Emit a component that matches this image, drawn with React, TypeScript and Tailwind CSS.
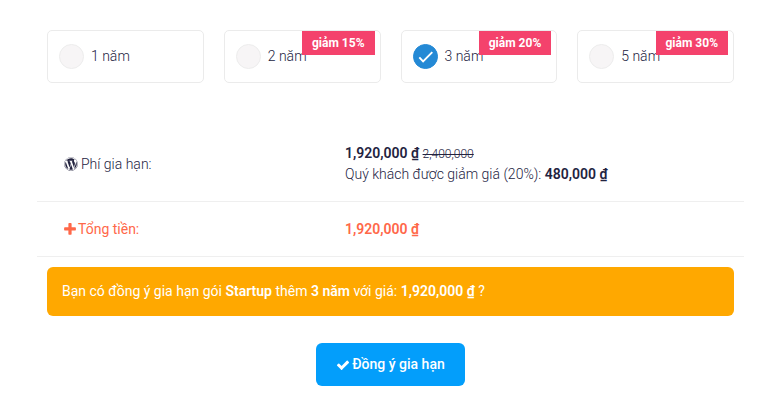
import { useState } from "react";
import { FaWordpress } from "react-icons/fa";

const plans = [
  { years: 1, discount: 0 },
  { years: 2, discount: 15 },
  { years: 3, discount: 20 },
  { years: 5, discount: 30 },
];

function PlusIcon() {
  return (
    <svg aria-hidden="true" viewBox="192 0 1408 1792" className="h-[15px] w-3 shrink-0 fill-current">
      <path d="M1600 736v192q0 40-28 68t-68 28h-416v416q0 40-28 68t-68 28h-192q-40 0-68-28t-28-68v-416h-416q-40 0-68-28t-28-68v-192q0-40 28-68t68-28h416v-416q0-40 28-68t68-28h192q40 0 68 28t28 68v416h416q40 0 68 28t28 68z" />
    </svg>
  );
}

function CheckIcon() {
  return (
    <svg aria-hidden="true" viewBox="0 0 1792 1792" className="h-3.5 w-3.5 shrink-0 fill-current">
      <path d="M1671 566q0 40-28 68l-724 724-136 136q-28 28-68 28t-68-28l-136-136-362-362q-28-28-28-68t28-68l136-136q28-28 68-28t68 28l294 295 656-657q28-28 68-28t68 28l136 136q28 28 28 68z" />
    </svg>
  );
}

function PlanOption({ years, discount, checked, onSelect }: { years: number; discount: number; checked: boolean; onSelect: () => void }) {
  return (
    <label className="relative flex h-[53px] cursor-pointer items-center gap-[7px] rounded-[5px] border border-[#ebebeb] pl-[11px]">
      <span className="grid h-[25px] w-[25px] shrink-0">
        <input
          type="radio"
          name="years"
          checked={checked}
          onChange={onSelect}
          className="col-start-1 row-start-1 appearance-none rounded-full border border-[#ededed] bg-[#f7f5f6] checked:border-[#2489d5] checked:bg-[#2489d5]"
        />
        {checked && (
          <svg aria-hidden="true" viewBox="0 0 25 25" className="pointer-events-none col-start-1 row-start-1 h-[25px] w-[25px]">
            <path d="M6.3 13.3l3.8 4 9.2-9.2" fill="none" stroke="white" strokeWidth="1.9" />
          </svg>
        )}
      </span>
      <span>{years} năm</span>
      {discount > 0 && (
        <span className="absolute top-0 right-[5px] bg-[#f4426c] px-2.5 text-xs leading-6 font-bold text-white">
          giảm {discount}%
        </span>
      )}
    </label>
  );
}

export default function App() {
  const [selected, setSelected] = useState(3);

  return (
    <main className="bg-white pt-[30px] pr-[31px] pb-[26px] pl-[37px] font-['Roboto','Liberation_Sans',sans-serif] text-sm leading-[21px] font-light text-[#23233f]">
      <div role="radiogroup" aria-label="Số năm gia hạn" className="grid grid-cols-4 gap-5 px-2.5">
        {plans.map((plan) => (
          <PlanOption key={plan.years} {...plan} checked={selected === plan.years} onSelect={() => setSelected(plan.years)} />
        ))}
      </div>

      <table className="mt-11 w-full border-collapse text-left">
        <tbody>
          <tr className="border-b border-[#efefef]">
            <th scope="row" className="w-[281px] py-4 pl-[27px] font-light">
              <span className="flex items-center gap-[3px]">
                <FaWordpress aria-hidden="true" className="h-3.5 w-3.5 shrink-0" />
                Phí gia hạn:
              </span>
            </th>
            <td className="py-4 pl-[27px]">
              <p>
                <b className="font-semibold">1,920,000 ₫</b> <s className="text-xs">2,400,000</s>
              </p>
              <p>
                Quý khách được giảm giá (20%): <b className="font-semibold">480,000 ₫</b>
              </p>
            </td>
          </tr>
          <tr className="border-b border-[#efefef] text-[#ff6849]">
            <th scope="row" className="pt-[17px] pb-4 pl-[27px] font-normal">
              <span className="flex items-center gap-0.5">
                <PlusIcon />
                Tổng tiền:
              </span>
            </th>
            <td className="pt-[17px] pb-4 pl-[27px] font-semibold">1,920,000 ₫</td>
          </tr>
        </tbody>
      </table>

      <p className="mx-2.5 mt-2.5 rounded-md bg-[#ffa800] px-[15px] py-3.5 font-normal text-white">
        Bạn có đồng ý gia hạn gói <b className="font-semibold">Startup</b> thêm <b className="font-semibold">3 năm</b> với giá:{" "}
        <b className="font-semibold">1,920,000 ₫</b> ?
      </p>

      <div className="mt-[27px] flex justify-center px-2.5">
        <button type="button" className="flex cursor-pointer items-center gap-0.5 rounded-md bg-[#039efb] px-5 py-[11px] font-medium text-white">
          <CheckIcon />
          Đồng ý gia hạn
        </button>
      </div>
    </main>
  );
}
